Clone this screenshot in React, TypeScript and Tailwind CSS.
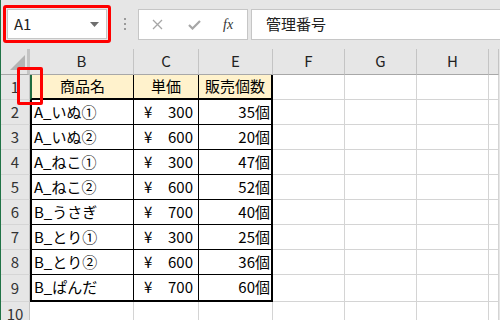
const rows = [
  { name: 'A_いぬ①', price: '300', count: '35個' },
  { name: 'A_いぬ②', price: '600', count: '20個' },
  { name: 'A_ねこ①', price: '300', count: '47個' },
  { name: 'A_ねこ②', price: '600', count: '52個' },
  { name: 'B_うさぎ', price: '700', count: '40個' },
  { name: 'B_とり①', price: '300', count: '25個' },
  { name: 'B_とり②', price: '600', count: '36個' },
  { name: 'B_ぱんだ', price: '700', count: '60個' },
]

const font = { fontFamily: '"Noto Sans CJK JP", "Noto Sans", sans-serif' }

function ColHeader({ label, width }: { label: string; width: string }) {
  return (
    <div className={`${width} flex h-[26px] items-center justify-center border-r border-b border-r-[#c4c4c4] border-b-[#a8a8a8] text-[15px] text-[#222]`}>
      {label}
    </div>
  )
}

function EmptyCell({ width, tall }: { width: string; tall?: boolean }) {
  return <div className={`${width} ${tall ? 'h-[27px]' : 'h-[25px]'} border-r border-b border-[#d4d4d4] bg-white`} />
}

export default function App() {
  const rightCols = ['w-[72px]', 'w-[72px]', 'w-[72px]', 'w-[10px]']

  return (
    <div className="relative h-[320px] w-[500px] overflow-hidden border-l border-[#217346] bg-[#e6e6e6]" style={font}>
      {/* formula bar */}
      <div className="flex h-[49px] items-start pt-[5px]">
        <div className="ml-[2px] h-[38px] w-[108px] rounded-[3px] border-[3px] border-[#ff0000] p-px">
          <div className="flex h-full items-center justify-between border border-[#c6c6c6] bg-white pr-[7px] pl-[6px]">
            <span className="text-[15px] text-[#222]">A1</span>
            <svg width="9" height="5" viewBox="0 0 9 5">
              <path d="M0 0h9L4.5 5z" fill="#6e6e6e" />
            </svg>
          </div>
        </div>
        <div className="flex h-[38px] w-[27px] flex-col items-center justify-center gap-[3px]">
          <span className="h-[2px] w-[2px] bg-[#9a9a9a]" />
          <span className="h-[2px] w-[2px] bg-[#9a9a9a]" />
          <span className="h-[2px] w-[2px] bg-[#9a9a9a]" />
        </div>
        <div className="mt-[4px] flex h-[31px] w-[110px] items-center border border-[#c6c6c6] bg-white">
          <svg className="ml-[13px]" width="11" height="11" viewBox="0 0 11 11">
            <path d="M1 1l9 9M10 1l-9 9" stroke="#a6a6a6" strokeWidth="1.3" />
          </svg>
          <svg className="ml-[25px]" width="13" height="10" viewBox="0 0 13 10">
            <path d="M1 5l3.5 3.5L12 1" stroke="#a6a6a6" strokeWidth="2.2" fill="none" />
          </svg>
          <span className="ml-[22px] text-[14px] text-[#333] italic" style={{ fontFamily: '"Liberation Serif", serif' }}>
            fx
          </span>
        </div>
        <div className="mt-[4px] ml-[3px] flex h-[31px] flex-1 items-center border border-r-0 border-[#c6c6c6] bg-white pl-[14px] text-[15px] text-[#222]">
          管理番号
        </div>
      </div>

      {/* sheet */}
      <div className="flex">
        {/* row headers */}
        <div className="flex w-[29px] flex-col">
          <div className="relative h-[26px] border-r-[3px] border-b border-r-[#c4c4c4] border-b-[#a8a8a8]">
            <svg className="absolute right-[2px] bottom-[4px]" width="15" height="15" viewBox="0 0 15 15">
              <path d="M15 0V15H0z" fill="#b4b4b4" />
            </svg>
          </div>
          {Array.from({ length: 10 }, (_, i) => (
            <div
              key={i}
              className={`${i === 8 ? 'h-[27px]' : 'h-[25px]'} flex items-center justify-center border-r border-b border-r-[#c4c4c4] border-b-[#d6d6d6] text-[15px] text-[#333]`}
            >
              {i + 1}
            </div>
          ))}
        </div>

        {/* B, C, E */}
        <div className="flex w-[243px] flex-col">
          <div className="flex">
            <ColHeader label="B" width="w-[104px]" />
            <ColHeader label="C" width="w-[65px]" />
            <ColHeader label="E" width="w-[74px]" />
          </div>
          <div className="grid grid-cols-[104px_65px_72px] border-r-2 border-b-2 border-black text-[15px] text-black">
            <div className="flex h-[25px] items-center justify-center border-r border-b-2 border-l-2 border-r-black border-b-black border-l-[#1f6b3f] bg-[#fff2cc]">
              商品名
            </div>
            <div className="flex h-[25px] items-center justify-center border-r border-b-2 border-black bg-[#fff2cc]">単価</div>
            <div className="flex h-[25px] items-center justify-center border-b-2 border-black bg-[#fff2cc]">販売個数</div>
            {rows.map((r, i) => {
              const last = i === rows.length - 1
              return (
                <div key={r.name} className="contents">
                  <div className={`flex h-[25px] items-center border-r border-l-2 border-black bg-white pl-[2px] ${last ? '' : 'border-b'}`}>
                    {r.name}
                  </div>
                  <div className={`flex h-[25px] items-center justify-between border-r border-black bg-white pr-[5px] pl-[10px] ${last ? '' : 'border-b'}`}>
                    <span>¥</span>
                    <span>{r.price}</span>
                  </div>
                  <div className={`flex h-[25px] items-center justify-end border-black bg-white pr-[1px] ${last ? '' : 'border-b'}`}>
                    {r.count}
                  </div>
                </div>
              )
            })}
          </div>
          <div className="flex">
            <EmptyCell width="w-[104px]" />
            <EmptyCell width="w-[65px]" />
            <EmptyCell width="w-[74px]" />
          </div>
        </div>

        {/* F, G, H, I */}
        <div className="flex flex-col">
          <div className="flex">
            <ColHeader label="F" width="w-[72px]" />
            <ColHeader label="G" width="w-[72px]" />
            <ColHeader label="H" width="w-[72px]" />
            <ColHeader label="" width="w-[10px]" />
          </div>
          {Array.from({ length: 10 }, (_, i) => (
            <div key={i} className="flex">
              {rightCols.map((w, j) => (
                <EmptyCell key={j} width={w} tall={i === 8} />
              ))}
            </div>
          ))}
        </div>
      </div>

      {/* callout around A1 */}
      <div className="absolute top-[67px] left-[16px] h-[38px] w-[26px] rounded-[2px] border-[3px] border-[#ff0000]" />
    </div>
  )
}
